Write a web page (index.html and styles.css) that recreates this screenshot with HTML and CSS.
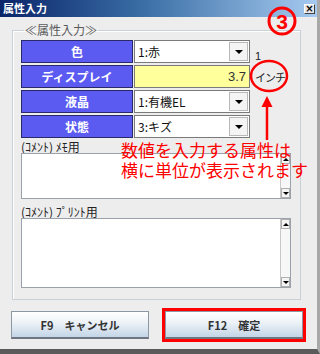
FILE: index.html
```html
<!DOCTYPE html>
<html lang="ja">
<head>
<meta charset="utf-8">
<title>属性入力</title>
<link rel="stylesheet" href="styles.css">
</head>
<body>
<div class="window">
  <div class="titlebar">
    <span class="title">属性入力</span>
    <span class="close">×</span>
  </div>
  <div class="client">
    <fieldset class="group">
      <legend class="legend">≪属性入力≫</legend>
      <div class="row">
        <div class="lbl">色</div>
        <div class="combo"><span class="val">1:赤</span><span class="drop"><span class="tri"></span></span></div>
        <span class="note">1</span>
      </div>
      <div class="row">
        <div class="lbl">ディスプレイ</div>
        <div class="input">3.7</div>
        <span class="unit">インチ</span>
      </div>
      <div class="row">
        <div class="lbl">液晶</div>
        <div class="combo"><span class="val">1:有機EL</span><span class="drop"><span class="tri"></span></span></div>
      </div>
      <div class="row">
        <div class="lbl">状態</div>
        <div class="combo"><span class="val">3:キズ</span><span class="drop"><span class="tri"></span></span></div>
      </div>
      <div class="caption">(ｺﾒﾝﾄ) ﾒﾓ用</div>
      <div class="memo memo-short">
        <div class="sb"><span class="sbtn"><span class="up"></span></span><span class="track"></span><span class="sbtn"><span class="down"></span></span></div>
      </div>
      <div class="caption caption-2">(ｺﾒﾝﾄ) ﾌﾟﾘﾝﾄ用</div>
      <div class="memo memo-tall">
        <div class="sb"><span class="sbtn"><span class="up"></span></span><span class="track"></span><span class="sbtn"><span class="down"></span></span></div>
      </div>
    </fieldset>
    <div class="buttons">
      <button class="btn">F9　キャンセル</button>
      <button class="btn btn-ok">F12　確定</button>
    </div>
  </div>

  <svg class="marks" width="320" height="354" viewBox="0 0 320 354">
    <circle cx="282" cy="21" r="13" fill="none" stroke="#f00" stroke-width="3"/>
    <text x="282" y="28.5" text-anchor="middle" class="num">3</text>
    <ellipse cx="269" cy="76" rx="18" ry="15" fill="none" stroke="#f00" stroke-width="2.5"/>
    <line x1="267" y1="104" x2="267" y2="140" stroke="#f00" stroke-width="2.5"/>
    <path d="M267 96 L272.5 107 L261.5 107 Z" fill="#f00"/>
  </svg>
  <div class="annot">数値を入力する属性は<br>横に単位が表示されます</div>
</div>
</body>
</html>
```

FILE: styles.css
```css
* { box-sizing: border-box; }

html, body {
  margin: 0;
  padding: 0;
  background: #ececec;
}

body {
  font-family: "Noto Sans CJK JP", "Noto Sans", sans-serif;
  color: #222;
}

.window {
  position: relative;
  width: 320px;
  height: 354px;
  background: #ededed;
  border-right: 3px solid #a8a8a8;
  border-bottom: 5px solid #5a5a5a;
  overflow: hidden;
}

.titlebar {
  height: 17px;
  background: linear-gradient(to right, #0a246a 0%, #3a6ea5 45%, #a6caf0 100%);
  display: flex;
  align-items: center;
  justify-content: space-between;
  padding: 0 2px 0 3px;
}

.title {
  color: #fff;
  font-weight: bold;
  font-size: 11px;
  line-height: 13px;
}

.close {
  width: 11px;
  height: 10px;
  margin-top: 1px;
  background: #e6e6e6;
  border: 1px solid;
  border-color: #fff #404040 #404040 #fff;
  font-size: 10px;
  line-height: 8px;
  font-weight: bold;
  text-align: center;
  color: #000;
  font-family: "DejaVu Sans", sans-serif;
}

.client {
  padding: 0;
}

.group {
  margin: 6px 0 0 12px;
  width: 289px;
  padding: 3px 9px 11px 8px;
  border: 1px solid #c9d0d6;
  box-shadow: inset 1px 1px 0 #fff;
  min-width: 0;
}

.legend {
  padding: 0 1px;
  margin-left: 3px;
  font-size: 12px;
  line-height: 14px;
  color: #5a5a5a;
}

.row {
  display: flex;
  align-items: center;
  height: 23px;
  margin-bottom: 2px;
  white-space: nowrap;
}

.lbl {
  flex-shrink: 0;
  width: 112px;
  height: 23px;
  background: #5b5bf2;
  border: 1px solid #2a2a6a;
  color: #fff;
  font-weight: bold;
  font-size: 12px;
  line-height: 21px;
  text-align: center;
}

.combo {
  flex-shrink: 0;
  margin-left: 1px;
  width: 116px;
  height: 23px;
  background: #fff;
  border: 1px solid #7a7a7a;
  display: flex;
  align-items: stretch;
}

.val {
  flex: 1;
  font-size: 12px;
  line-height: 21px;
  padding-left: 3px;
  color: #111;
}

.drop {
  width: 19px;
  margin: 1px;
  background: #f4f4f4;
  border: 1px solid #b8b8b8;
  display: flex;
  align-items: center;
  justify-content: center;
}

.tri {
  width: 0;
  height: 0;
  border-left: 4px solid transparent;
  border-right: 4px solid transparent;
  border-top: 4px solid #000;
}

.note {
  flex-shrink: 0;
  margin-left: 5px;
  margin-top: 8px;
  font-size: 11px;
  font-family: "Liberation Sans", sans-serif;
  color: #222;
}

.input {
  flex-shrink: 0;
  margin-left: 1px;
  width: 116px;
  height: 23px;
  background: #ffff9c;
  border: 1px solid #7a7a7a;
  text-align: right;
  padding-right: 3px;
  font-family: "Liberation Sans", sans-serif;
  font-size: 13px;
  line-height: 21px;
  color: #333;
}

.unit {
  flex-shrink: 0;
  margin-left: 5px;
  font-size: 11px;
  letter-spacing: -1px;
  color: #222;
}

.caption {
  font-size: 12px;
  line-height: 13px;
  height: 13px;
  color: #222;
  white-space: nowrap;
}

.caption-2 {
  margin-top: 6px;
}

.memo {
  position: relative;
  width: 270px;
  background: #fff;
  border: 1px solid #9aa3ab;
  display: flex;
  justify-content: flex-end;
}

.memo-short { height: 46px; }
.memo-tall { height: 70px; }

.sb {
  width: 10px;
  display: flex;
  flex-direction: column;
  background: #f0f0f0;
  border-left: 1px solid #c8c8c8;
}

.sbtn {
  height: 10px;
  display: flex;
  align-items: center;
  justify-content: center;
  background: #f4f4f4;
  border: 1px solid #b0b0b0;
}

.track {
  flex: 1;
  background: #f7f7f7;
}

.up {
  border-left: 3px solid transparent;
  border-right: 3px solid transparent;
  border-bottom: 3px solid #000;
}

.down {
  border-left: 3px solid transparent;
  border-right: 3px solid transparent;
  border-top: 3px solid #000;
}

.buttons {
  display: flex;
  gap: 16px;
  padding-left: 11px;
  margin-top: 11px;
}

.btn {
  width: 138px;
  height: 28px;
  border: 1px solid #8c98a4;
  border-bottom: 2px solid #6e7680;
  background: linear-gradient(to bottom, #ffffff 0%, #eef3f8 40%, #c3d5e6 100%);
  font-family: "Noto Sans CJK JP", sans-serif;
  font-weight: bold;
  font-size: 11px;
  color: #333;
  padding: 0;
}

.btn-ok {
  outline: 3px solid #f00;
}

.marks {
  position: absolute;
  left: 0;
  top: 0;
}

.num {
  font-family: "Liberation Sans", sans-serif;
  font-weight: bold;
  font-size: 21px;
  fill: #f00;
}

.annot {
  position: absolute;
  left: 121px;
  top: 140px;
  font-size: 17px;
  line-height: 20px;
  color: #f00;
  white-space: nowrap;
}
```
